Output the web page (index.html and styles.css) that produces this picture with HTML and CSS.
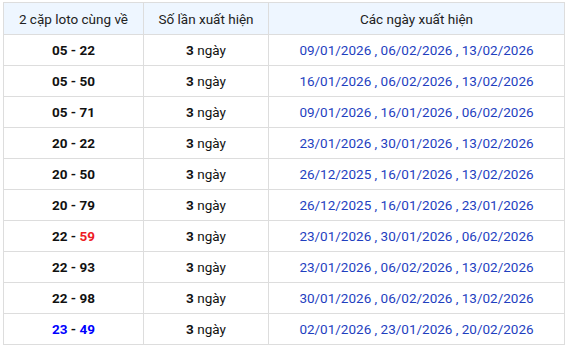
FILE: index.html
```html
<!DOCTYPE html>
<html lang="vi">
<head>
<meta charset="utf-8">
<link rel="stylesheet" href="styles.css">
</head>
<body>
<table class="loto">
  <colgroup>
    <col class="c1"><col class="c2"><col class="c3">
  </colgroup>
  <thead>
    <tr><th>2 cặp loto cùng về</th><th>Số lần xuất hiện</th><th>Các ngày xuất hiện</th></tr>
  </thead>
  <tbody>
    <tr><td class="pair">05 - 22</td><td><b>3</b> ngày</td><td class="dates">09/01/2026 , 06/02/2026 , 13/02/2026</td></tr>
    <tr><td class="pair">05 - 50</td><td><b>3</b> ngày</td><td class="dates">16/01/2026 , 06/02/2026 , 13/02/2026</td></tr>
    <tr><td class="pair">05 - 71</td><td><b>3</b> ngày</td><td class="dates">09/01/2026 , 16/01/2026 , 06/02/2026</td></tr>
    <tr><td class="pair">20 - 22</td><td><b>3</b> ngày</td><td class="dates">23/01/2026 , 30/01/2026 , 13/02/2026</td></tr>
    <tr><td class="pair">20 - 50</td><td><b>3</b> ngày</td><td class="dates">26/12/2025 , 16/01/2026 , 13/02/2026</td></tr>
    <tr><td class="pair">20 - 79</td><td><b>3</b> ngày</td><td class="dates">26/12/2025 , 16/01/2026 , 23/01/2026</td></tr>
    <tr><td class="pair">22 - <span class="red">59</span></td><td><b>3</b> ngày</td><td class="dates">23/01/2026 , 30/01/2026 , 06/02/2026</td></tr>
    <tr><td class="pair">22 - 93</td><td><b>3</b> ngày</td><td class="dates">23/01/2026 , 06/02/2026 , 13/02/2026</td></tr>
    <tr><td class="pair">22 - 98</td><td><b>3</b> ngày</td><td class="dates">30/01/2026 , 06/02/2026 , 13/02/2026</td></tr>
    <tr><td class="pair"><span class="blue">23</span> - <span class="blue">49</span></td><td><b>3</b> ngày</td><td class="dates">02/01/2026 , 23/01/2026 , 20/02/2026</td></tr>
  </tbody>
</table>
</body>
</html>
```
FILE: styles.css
```css
html, body {
  margin: 0;
  background: #fff;
}
body {
  padding: 2px 3px;
  font-family: Roboto, "Liberation Sans", sans-serif;
  font-size: 13.5px;
  color: #111;
}
.loto {
  width: 561px;
  border-collapse: collapse;
  table-layout: fixed;
}
.c1 { width: 140px; }
.c2 { width: 125px; }
.c3 { width: 296px; }
.loto th, .loto td {
  border: 1px solid #dddddd;
  text-align: center;
  padding: 0;
}
.loto th {
  height: 31px;
  background: #eef6ff;
  font-weight: normal;
  color: #222;
}
.loto td {
  height: 30px;
}
.loto td b {
  font-weight: bold;
}
.pair {
  font-weight: bold;
  color: #111;
}
.red { color: #ee1c25; }
.blue { color: #0000ff; }
.dates {
  color: #1f3fbf;
}
```
